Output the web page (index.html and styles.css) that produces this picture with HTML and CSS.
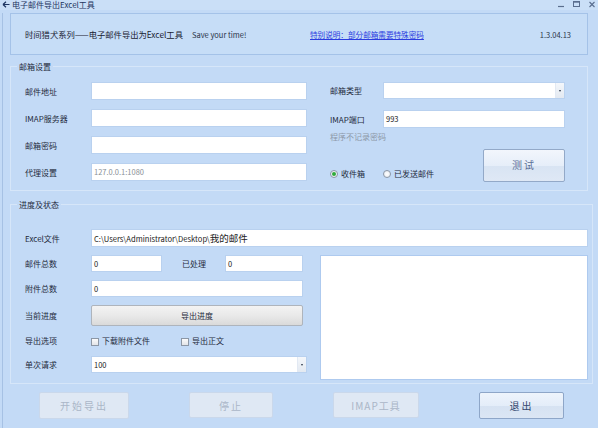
FILE: index.html
```html
<!DOCTYPE html>
<html>
<head>
<meta charset="utf-8">
<title>电子邮件导出Excel工具</title>
<link rel="stylesheet" href="styles.css">
</head>
<body>
<div class="titlebar">
  <svg class="app-icon" width="8" height="7" viewBox="0 0 8 7"><path d="M1 3.5 L4 0.8 M1 3.5 L4 6.2 M1 3.5 H7.5" stroke="#1e3560" stroke-width="1.2" fill="none"/></svg>
  <span class="title">电子邮件导出Excel工具</span>
  <div class="winctl">
    <svg width="6" height="8" viewBox="0 0 6 8"><path d="M0 6.5 H6" stroke="#5a6e8e" stroke-width="1.2"/></svg>
    <svg width="7" height="8" viewBox="0 0 7 8"><rect x="0.5" y="1.5" width="6" height="5" fill="none" stroke="#5a6e8e"/><path d="M0.5 2.2 H6.5" stroke="#5a6e8e"/></svg>
    <svg width="6" height="8" viewBox="0 0 6 8"><path d="M0.5 2 L5.5 7 M5.5 2 L0.5 7" stroke="#5a6e8e" stroke-width="1.1"/></svg>
  </div>
</div>
<div class="frame">
  <div class="header">
    <span class="slogan">时间猎犬系列——电子邮件导出为Excel工具</span>
    <span class="save">Save your time!</span>
    <a class="notice" href="#">特别说明：部分邮箱需要特殊密码</a>
    <span class="version">1.3.04.13</span>
  </div>

  <div class="group g1">
    <div class="group-title">邮箱设置</div>
    <div class="g1-body">
      <div class="col-left">
        <div class="row"><span class="lbl">邮件地址</span><div class="field w216"></div></div>
        <div class="row"><span class="lbl">IMAP服务器</span><div class="field w216"></div></div>
        <div class="row"><span class="lbl">邮箱密码</span><div class="field w216"></div></div>
        <div class="row"><span class="lbl">代理设置</span><div class="field w216 placeholder">127.0.0.1:1080</div></div>
      </div>
      <div class="col-right">
        <div class="row r17"><span class="lbl l53">邮箱类型</span><div class="combo w182"><span class="combo-btn"><span class="caret"></span></span></div></div>
        <div class="row port"><span class="lbl l53">IMAP端口</span><div class="field w182">993</div></div>
        <div class="note">程序不记录密码</div>
        <div class="test-row">
          <div class="radios">
            <span class="radio checked"><span class="dot"></span></span><span class="rtext">收件箱</span>
            <span class="radio second"></span><span class="rtext">已发送邮件</span>
          </div>
          <button class="btn btn-test">测试</button>
        </div>
      </div>
    </div>
  </div>

  <div class="group g2">
    <div class="group-title">进度及状态</div>
    <div class="g2-body">
      <div class="row"><span class="lbl">Excel文件</span><div class="field grow path">C:\Users\Administrator\Desktop\<span class="cjk-big">我的邮件</span></div></div>
      <div class="g2-split">
        <div class="col-left2">
          <div class="row r17">
            <span class="lbl">邮件总数</span><div class="field w71">0</div>
            <span class="lbl l43">已处理</span><div class="field w78">0</div>
          </div>
          <div class="row r17 mt8"><span class="lbl">附件总数</span><div class="field w212">0</div></div>
          <div class="row r21 mt8"><span class="lbl">当前进度</span><div class="progress w212">导出进度</div></div>
          <div class="row r14 mt7">
            <span class="lbl">导出选项</span>
            <span class="check"></span><span class="ctext c1">下载附件文件</span>
            <span class="check"></span><span class="ctext">导出正文</span>
          </div>
          <div class="row r17 mt9"><span class="lbl">单次请求</span><div class="combo w216">100<span class="combo-btn"><span class="caret"></span></span></div></div>
        </div>
        <div class="log"></div>
      </div>
    </div>
  </div>

  <div class="actions">
    <button class="btn disabled b1">开始导出</button>
    <button class="btn disabled b2">停止</button>
    <button class="btn disabled b3">IMAP工具</button>
    <button class="btn b4">退出</button>
  </div>
</div>
</body>
</html>
```

FILE: styles.css
```css
* { box-sizing: border-box; margin: 0; padding: 0; }
html, body { width: 598px; height: 428px; overflow: hidden; }
body {
  background: #c3daf6;
  font-family: "Noto Sans CJK SC", "Noto Sans", sans-serif;
  font-size: 8px;
  color: #1f2a3c;
}

.titlebar {
  height: 10px;
  display: flex;
  align-items: flex-start;
  background: #cadff7;
  padding-left: 2px;
}
.app-icon { margin-top: 1px; flex: none; }
.title {
  font-size: 8px;
  line-height: 10px;
  margin-left: 2px;
  color: #1e3560;
}
.winctl {
  margin-left: auto;
  display: flex;
  gap: 9px;
  padding-right: 3px;
}

.frame {
  margin-left: 2px;
  border-left: 1px solid #a6c1e4;
  padding-left: 7px;
  height: 418px;
}

.header {
  margin-top: 3px;
  width: 578px;
  height: 42px;
  border: 1px solid #a4c2e8;
  background: #c6ddf7;
  display: grid;
  grid-template-columns: 167px 118px 1fr auto;
  align-items: center;
  padding: 0 16px 0 14px;
}
.slogan { font-size: 8.3px; color: #1a2233; white-space: nowrap; }
.save { font-size: 7.5px; color: #2a3447; white-space: nowrap; }
.notice { font-size: 7.6px; color: #2b3ce0; text-decoration: underline; white-space: nowrap; }
.version { font-size: 7.5px; color: #2a3447; }

.group {
  border: 1px solid #d6e6f9;
  margin-top: 11px;
}
.g1 { width: 578px; }
.g2 { width: 583px; margin-top: 13px; }
.group-title {
  width: fit-content;
  margin: -7px 0 0 6px;
  padding: 0 2px;
  background: #c3daf6;
  font-size: 8px;
  line-height: 14px;
  color: #1f2a3c;
}

.g1-body {
  display: flex;
  padding: 8px 0 8px 14px;
}
.col-left { display: flex; flex-direction: column; gap: 9px; }
.row { display: flex; align-items: center; height: 18px; }
.r17 { height: 17px; }
.r21 { height: 21px; }
.r14 { height: 14px; }
.mt7 { margin-top: 7px; }
.mt8 { margin-top: 8px; }
.mt9 { margin-top: 9px; }
.lbl { width: 66px; flex: none; white-space: nowrap; line-height: 11px; }
.l53 { width: 53px; }
.l43 { width: 43px; margin-left: 20px; }

.field {
  height: 100%;
  background: #fff;
  border: 1px solid #b9d1ef;
  padding: 0 2px;
  font-size: 7.5px;
  line-height: 15px;
  color: #1a1a1a;
  flex: none;
}
.placeholder { color: #8a8f96; }
.w216 { width: 216px; }
.w212 { width: 212px; }
.w182 { width: 182px; }
.w71 { width: 71px; }
.w78 { width: 78px; }
.grow { flex: 1; }
.path { font-size: 7.6px; line-height: 16px; }
.cjk-big { font-size: 9.5px; }

.combo {
  height: 100%;
  background: #fff;
  border: 1px solid #b9d1ef;
  display: flex;
  align-items: center;
  padding-left: 2px;
  font-size: 7.5px;
  color: #1a1a1a;
  flex: none;
}
.combo-btn {
  margin-left: auto;
  width: 9px;
  height: 100%;
  background: linear-gradient(#f4f7fb, #e3e9f1);
  border-left: 1px solid #e2e9f3;
  display: flex;
  align-items: center;
  justify-content: center;
}
.caret {
  width: 0; height: 0;
  border-left: 1.5px solid transparent;
  border-right: 1.5px solid transparent;
  border-top: 2px solid #2a3447;
}

.col-right {
  margin-left: 23px;
  width: 235px;
  display: flex;
  flex-direction: column;
}
.port { margin-top: 11px; }
.note { margin-top: 2px; line-height: 14px; color: #8c98a8; }
.test-row {
  margin-top: 5px;
  display: flex;
  align-items: flex-end;
  height: 33px;
}
.radios {
  display: flex;
  align-items: center;
  height: 11px;
  margin-bottom: 3px;
}
.radio {
  width: 8px; height: 8px;
  border-radius: 50%;
  border: 1px solid #8c97a6;
  background: radial-gradient(circle, #ffffff, #e4e8ee);
  display: flex;
  align-items: center;
  justify-content: center;
  flex: none;
}
.radio .dot { width: 4px; height: 4px; border-radius: 50%; background: #2faa3c; }
.radio.second { margin-left: 18px; }
.rtext { margin-left: 3px; line-height: 11px; }

.btn {
  font-family: "Noto Sans CJK SC", sans-serif;
  border-radius: 2px;
  font-size: 10px;
  letter-spacing: 2px;
  display: flex;
  align-items: center;
  justify-content: center;
  flex: none;
}
.btn-test {
  margin-left: auto;
  width: 82px;
  height: 33px;
  border: 1px solid #93a9c8;
  background: linear-gradient(#f2f6fc 0%, #e6eef9 50%, #d8e4f3 52%, #dfe8f5 100%);
  color: #5c6f96;
  padding-bottom: 3px;
}

.g2-body { padding: 17px 4px 3px 14px; }
.g2-split { display: flex; margin-top: 8px; }
.col-left2 { width: 282px; display: flex; flex-direction: column; }
.progress {
  height: 100%;
  border: 1px solid #aeb4bc;
  border-radius: 2px;
  background: linear-gradient(#f3f3f3, #e9e9e9 50%, #dadada);
  text-align: center;
  line-height: 19px;
  font-size: 8px;
  color: #1f2a3c;
}
.check {
  width: 8px; height: 8px;
  border: 1px solid #8c97a6;
  background: linear-gradient(#fbfbfb, #e2e4e8);
  flex: none;
  margin-top: 3px;
}
.ctext { margin-left: 3px; line-height: 11px; margin-top: 1px; }
.c1 { width: 79px; }
.log {
  margin-left: 13px;
  flex: 1;
  height: 125px;
  background: #fff;
  border: 1px solid #aecaef;
}

.actions {
  display: flex;
  gap: 60px;
  padding-left: 29px;
  margin-top: 8px;
}
.actions .btn { height: 26px; }
.btn.disabled {
  background: #dfe8f4;
  border: 1px solid #cad8eb;
  color: #aab6c7;
}
.b1 { width: 90px; height: 27px !important; }
.b2 { width: 84px; }
.b3 { width: 86px; letter-spacing: 1px; }
.b4 {
  width: 85px;
  height: 27px !important;
  border: 1px solid #8ea6c8;
  background: linear-gradient(#eef4fc 0%, #e4edf9 50%, #d6e2f2 52%, #dbe6f4 100%);
  color: #33476e;
}
```
